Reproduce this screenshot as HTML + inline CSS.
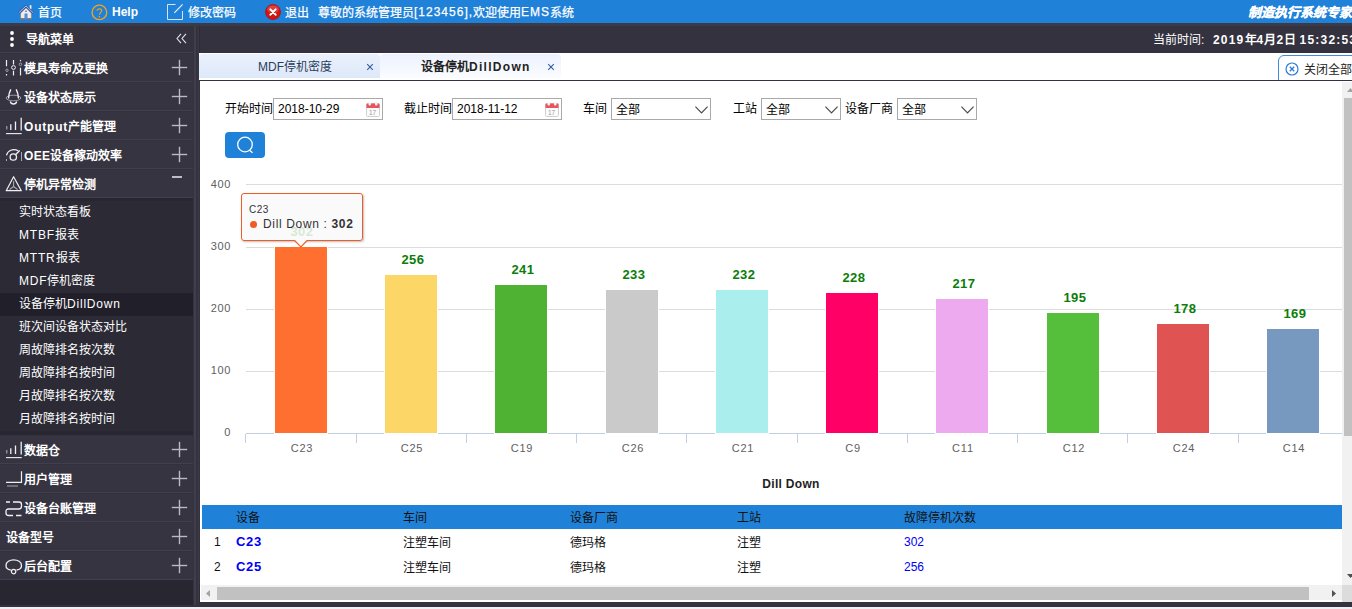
<!DOCTYPE html>
<html lang="zh-CN">
<head>
<meta charset="utf-8">
<title>EMS</title>
<style>
*{box-sizing:border-box;margin:0;padding:0}
html,body{width:1352px;height:609px;overflow:hidden;background:#34323e;font-family:"Liberation Sans",sans-serif;font-size:12px;color:#000}
.abs{position:absolute}
#top{position:absolute;left:0;top:0;width:1352px;height:23px;background:#2081d8;color:#fff;font-size:12px;line-height:26px;white-space:nowrap;overflow:hidden}
#top span{position:absolute;top:0;-webkit-text-stroke:.25px #fff}
#top svg{position:absolute}
#top u{text-decoration:none;letter-spacing:1px;position:relative;top:-1px}
#dark{position:absolute;left:0;top:23px;width:1352px;height:586px;background:#34323e}
#strip{position:absolute;left:0;top:23px;width:1352px;height:3px;background:#3c3a47}
#bottom{position:absolute;left:0;top:607px;width:1352px;height:2px;background:#f0f0f3}
#side{position:absolute;left:0;top:26px;width:193px;height:579px;background:#282731;color:#fff}
#split{position:absolute;left:194px;top:26px;width:6px;height:579px;background:linear-gradient(to right,#403e4b 0,#403e4b 2px,#34323e 2px,#34323e 4px,#3b3946 4px,#3b3946 5px,#2c2b36 5px,#2c2b36 6px)}
.mi{position:absolute;left:0;width:193px;height:29px;background:#363441;border-bottom:1px solid #423f4d;border-top:1px solid #33313d;font-weight:bold;font-size:12px;line-height:27px;white-space:nowrap}
.mi b{position:absolute;left:24px;top:2px;font-weight:bold}
.mi b u,.sub u,.tab u{text-decoration:none;letter-spacing:.8px}
.mi svg{position:absolute}
.plus{position:absolute;left:172px;top:6px;width:15px;height:15px}
.plus:before{content:"";position:absolute;left:0;top:7px;width:15px;height:1px;background:#b9b9bf;box-shadow:0 0 0 .2px #b9b9bf}
.plus:after{content:"";position:absolute;left:7px;top:0;width:1px;height:15px;background:#b9b9bf;box-shadow:0 0 0 .2px #b9b9bf}
.sub{position:absolute;left:0;width:193px;height:23px;line-height:23px;padding-left:19px;font-size:12px;color:#fff;white-space:nowrap;background:#2b2a35;overflow:hidden}
.sub.on{background:#211f2a}
#timebar u{text-decoration:none;letter-spacing:1.2px}
#timebar{overflow:hidden;position:absolute;left:199px;top:26px;width:1153px;height:27px;color:#fff;font-size:12px;line-height:27px;white-space:nowrap}
#tabs{position:absolute;left:199px;top:53px;width:1153px;height:27px;background:#fff}
.tab{position:absolute;top:1px;height:24px;width:181px;line-height:26px;font-size:12px;white-space:nowrap;border-radius:4px 4px 0 0}
#content{position:absolute;left:200px;top:81px;width:1142px;height:504px;background:#fff;overflow:hidden}
.lbl{position:absolute;top:18px;height:22px;line-height:20px;font-size:12px;white-space:nowrap}
.inp{position:absolute;top:17px;height:22px;border:1px solid #a9a9a9;background:#fff;font-size:12px;line-height:20px;padding-left:4px;white-space:nowrap}
.sel{position:absolute;top:17px;height:22px;border:1px solid #a9a9a9;background:#fff;font-size:12px;line-height:22px;padding-left:4px;white-space:nowrap}
.sel svg{position:absolute;right:2px;top:7px}
.cal{position:absolute;top:3px;right:2px;width:14px;height:15px}
.grid{position:absolute;left:46px;width:1096px;height:1px;background:#dcdcdc}
.yl{position:absolute;left:0;width:31px;text-align:right;font-size:11px;color:#606060;line-height:12px;letter-spacing:.6px}
.bar{position:absolute;width:52px;box-shadow:0 0 0 1px #fff}
.xl{position:absolute;top:360px;width:62px;text-align:center;font-size:11px;color:#606060;line-height:14px;letter-spacing:.8px}
.tick{position:absolute;top:353px;width:1px;height:9px;background:#c0d0e0}
.dl{position:absolute;width:60px;text-align:center;font-size:13px;font-weight:bold;color:#0a7d0a;line-height:14px;letter-spacing:.5px}
.th{position:absolute;top:2px;line-height:23px;font-size:12px;color:#111;white-space:nowrap}
.td.l{margin-top:1px}
.td.c{margin-top:0;letter-spacing:.7px}
.td{position:absolute;line-height:25px;margin-top:2px;font-size:12px;white-space:nowrap;color:#111}
</style>
</head>
<body>
<div id="dark"></div>
<div id="strip"></div>

<!-- top blue bar -->
<div id="top">
  <svg style="left:18px;top:5px" width="16" height="15" viewBox="0 0 16 15">
    <rect x="11.700" y=".2" width="1.700" height="4" fill="#f4f4f4"/>
    <path d="M2.600 8L8 2.800L13.400 8V14.300H2.600Z" fill="#ececec" stroke="#7a7a7a" stroke-width=".6"/>
    <path d="M2.600 13.800H13.400" stroke="#4a4a4a" stroke-width=".9"/>
    <path d="M.5 8.100L8 .9L15.500 8.100" fill="none" stroke="#3355a4" stroke-width="2.300" stroke-linejoin="miter"/>
    <path d="M.7 7.900L8 .9L15.300 7.900" fill="none" stroke="#d9e4fa" stroke-width=".8"/>
    <rect x="6.600" y="8.600" width="2.800" height="5.400" fill="#2d6bd2"/>
    <rect x="7.400" y="9.300" width="1.200" height="4.700" fill="#6fa4ee"/>
    <circle cx="8" cy="6.300" r=".8" fill="#555"/>
  </svg>
  <span style="left:38px">首页</span>
  <svg style="left:91px;top:4px" width="17" height="17" viewBox="0 0 17 17">
    <circle cx="8.400" cy="8.400" r="7.300" fill="none" stroke="#f5a31a" stroke-width="1.300"/>
    <path d="M6.100 6.700C6.100 4.300 10.700 4.300 10.700 6.800C10.700 8.500 8.400 8.700 8.400 10.700" fill="none" stroke="#f5a31a" stroke-width="1.150"/>
    <circle cx="8.400" cy="12.700" r=".8" fill="#f5a31a"/>
  </svg>
  <span style="left:112px;top:-1px;font-weight:bold;-webkit-text-stroke:0">Help</span>
  <svg style="left:166px;top:3px" width="18" height="18" viewBox="0 0 18 18">
    <path d="M9.500 1.500H1.500V16.500H16.500V8" fill="none" stroke="#d6e6f8" stroke-width="1"/>
    <path d="M16.600 1.300L8.300 9.800" fill="none" stroke="#e6f0fb" stroke-width="1.200"/>
  </svg>
  <span style="left:188px">修改密码</span>
  <svg style="left:265px;top:4px" width="16" height="16" viewBox="0 0 16 16">
    <circle cx="8" cy="8" r="7.500" fill="#d51414" stroke="#b31010" stroke-width=".8"/>
    <ellipse cx="8" cy="5.300" rx="5.600" ry="3.800" fill="#f0665a" opacity=".55"/>
    <path d="M5.300 5.300L10.700 10.700M10.700 5.300L5.300 10.700" stroke="#8c0d0d" stroke-width="3" stroke-linecap="round" opacity=".5"/>
    <path d="M5.300 5.300L10.700 10.700M10.700 5.300L5.300 10.700" stroke="#fff" stroke-width="2" stroke-linecap="round"/>
  </svg>
  <span style="left:285px">退出</span>
  <span style="left:318px">尊敬的系统管理员<u>[123456],</u>欢迎使用<u>EMS</u>系统</span>
  <span style="left:1248px;font-weight:bold;font-style:italic;font-size:13px">制造执行系统专家</span>
</div>

<!-- sidebar -->
<div id="side">
  <div class="abs" style="left:0;top:0;width:193px;height:27px;background:#34323e;border-bottom:1px solid #423f4d"></div>
  <svg class="abs" style="left:8px;top:4px" width="8" height="18" viewBox="0 0 8 18"><circle cx="4" cy="3" r="1.900" fill="#fff"/><circle cx="4" cy="9" r="1.900" fill="#fff"/><circle cx="4" cy="15" r="1.900" fill="#fff"/></svg>
  <div class="abs" style="left:26px;top:2px;line-height:25px;font-weight:bold;font-size:12px">导航菜单</div>
  <svg class="abs" style="left:176px;top:7px" width="11" height="11" viewBox="0 0 11 11"><path d="M5 .8L1 5.500L5 10.200M10 .8L6 5.500L10 10.200" fill="none" stroke="#e4e4e8" stroke-width="1.100"/></svg>
  <div class="mi" style="top:27px"><svg style="left:5px;top:4px" width="18" height="19" viewBox="0 0 18 19"><path d="M1.500 2v6.300M1.500 16v1.500M8.500 2v4.500M8.500 12.700v4.800M15.500 2v1.200M15.500 9.800v7.700" stroke="#f0f0f3" stroke-width="1.200" fill="none"/><circle cx="2" cy="12.300" r="1.200" fill="none" stroke="#a8a8b0" stroke-width=".9"/><circle cx="8.500" cy="9.500" r="1.900" fill="none" stroke="#f0f0f3" stroke-width="1"/><circle cx="15.500" cy="6.300" r="1.300" fill="none" stroke="#a8a8b0" stroke-width=".9"/></svg><b>模具寿命及更换</b><i class="plus"></i></div>
  <div class="mi" style="top:56px"><svg style="left:5px;top:4px" width="18" height="19" viewBox="0 0 18 19"><ellipse cx="8.500" cy="11" rx="7.300" ry="2.800" fill="none" stroke="#a8a8b0" stroke-width=".9"/><path d="M5.800 2.300C4.600 4.500 3.600 8 3.500 11.500M11.200 2.300C12.400 4.500 13.400 8 13.500 11.500" stroke="#f2f2f5" stroke-width="1.400" fill="none"/><path d="M5.300 14.500c.7 3.300 5.700 3.300 6.400 0" stroke="#f2f2f5" stroke-width="1.300" fill="none"/></svg><b>设备状态展示</b><i class="plus"></i></div>
  <div class="mi" style="top:85px"><svg style="left:5px;top:4px" width="18" height="19" viewBox="0 0 18 19"><path d="M1.800 10v3.500" stroke="#a8a8b0" stroke-width="1.100"/><path d="M5.800 8.300v5.700M10.500 5.400v8.600M16.200 1.800v12.700" stroke="#f0f0f3" stroke-width="1.300" fill="none"/><path d="M1 17.600h15.700" stroke="#f0f0f3" stroke-width="1.100"/></svg><b><u>Output</u>产能管理</b><i class="plus"></i></div>
  <div class="mi" style="top:114px"><svg style="left:5px;top:4px" width="18" height="19" viewBox="0 0 18 19"><path d="M1.500 10.300C2.500 5.500 8 3 13.300 5.800" stroke="#f0f0f3" stroke-width="1.200" fill="none"/><circle cx="8.300" cy="12" r="3.200" fill="none" stroke="#f0f0f3" stroke-width="1.300"/><path d="M10.500 9.700l4.200-4.200" stroke="#f0f0f3" stroke-width="1.300"/><path d="M16.500 7v9M1.500 14v2" stroke="#a8a8b0" stroke-width="1"/></svg><b><u style="letter-spacing:.3px">OEE</u>设备稼动效率</b><i class="plus"></i></div>
  <div class="mi" style="top:143px"><svg style="left:5px;top:4px" width="18" height="19" viewBox="0 0 18 19"><path d="M8.600 2.700L1.200 16.700H16.300Z" stroke="#f0f0f3" stroke-width="1.200" fill="none" stroke-linejoin="round"/><path d="M8.600 7v5.500M8.600 12.500l-4 3M8.600 12.500l4 3" stroke="#a8a8b0" stroke-width="1.100" fill="none"/></svg><b>停机异常检测</b><div class="abs" style="left:172px;top:6px;width:10px;height:2px;background:#bdbdc3"></div></div>
  <div class="sub" style="top:175px">实时状态看板</div>
  <div class="sub" style="top:198px"><u>MTBF</u>报表</div>
  <div class="sub" style="top:221px"><u>MTTR</u>报表</div>
  <div class="sub" style="top:244px"><u>MDF</u>停机密度</div>
  <div class="sub on" style="top:267px">设备停机<u>DillDown</u></div>
  <div class="sub" style="top:290px">班次间设备状态对比</div>
  <div class="sub" style="top:313px">周故障排名按次数</div>
  <div class="sub" style="top:336px">周故障排名按时间</div>
  <div class="sub" style="top:359px">月故障排名按次数</div>
  <div class="sub" style="top:382px">月故障排名按时间</div>
  <div class="mi" style="top:409px"><svg style="left:5px;top:4px" width="18" height="19" viewBox="0 0 18 19"><path d="M1.800 10v3.500" stroke="#a8a8b0" stroke-width="1.100"/><path d="M5.800 8.300v5.700M10.500 5.400v8.600M16.200 1.800v12.700" stroke="#f0f0f3" stroke-width="1.300" fill="none"/><path d="M1 17.600h15.700" stroke="#f0f0f3" stroke-width="1.100"/></svg><b>数据仓</b><i class="plus"></i></div>
  <div class="mi" style="top:438px"><svg style="left:5px;top:4px" width="18" height="19" viewBox="0 0 18 19"><path d="M1 13.400H16.500V2.300" stroke="#f0f0f3" stroke-width="1.200" fill="none"/><path d="M2 17h11" stroke="#a8a8b0" stroke-width="1"/></svg><b>用户管理</b><i class="plus"></i></div>
  <div class="mi" style="top:467px"><svg style="left:5px;top:4px" width="18" height="19" viewBox="0 0 18 19"><path d="M1 4h4M8 4h6q2.500 0 2.500 2.500v1.500q0 3-2.500 3H3.500q-2.500 0-2.500 2.500v1.500q0 2.500 2.500 2.500H8M11 17.500h5.500" stroke="#f0f0f3" stroke-width="1.300" fill="none"/></svg><b>设备台账管理</b><i class="plus"></i></div>
  <div class="mi" style="top:496px"><b style="left:6px">设备型号</b><i class="plus"></i></div>
  <div class="mi" style="top:525px"><svg style="left:5px;top:4px" width="18" height="19" viewBox="0 0 18 19"><path d="M5.800 14C3 13.700 1 12 1 9.500C1 2 16.500 2 16.500 9.500C16.500 12 14.500 13.700 11.600 14" stroke="#f0f0f3" stroke-width="1.300" fill="none"/><circle cx="8.600" cy="15.600" r="2.200" fill="none" stroke="#f0f0f3" stroke-width="1.200"/></svg><b>后台配置</b><i class="plus"></i></div>
</div>
<div id="split"></div>

<!-- right header (time) -->
<div id="timebar"><span class="abs" style="left:954px;top:1px">当前时间:</span><span class="abs" style="left:1014px;top:1px;font-size:12px;font-weight:bold"><u>2019</u>年<u>4</u>月<u>2</u>日 <u>15:32:53</u></span></div>

<!-- tabs -->
<div id="tabs">
  <div class="tab" style="left:0;background:linear-gradient(#eaf1fc,#dde8f9);color:#2c3d5a"><span class="abs" style="left:59px">MDF停机密度</span><svg class="abs" style="left:167px;top:9px" width="8" height="8" viewBox="0 0 8 8"><path d="M1.200 1.200l5.600 5.600M6.800 1.200l-5.600 5.600" stroke="#36609f" stroke-width="1.150"/></svg></div>
  <div class="tab" style="left:181px;background:linear-gradient(#ecf2fd,#fafcff);color:#222;font-weight:bold"><span class="abs" style="left:41px">设备停机<u style="letter-spacing:1.3px">DillDown</u></span><svg class="abs" style="left:167px;top:9px" width="8" height="8" viewBox="0 0 8 8"><path d="M1.200 1.200l5.600 5.600M6.800 1.200l-5.600 5.600" stroke="#36609f" stroke-width="1.150"/></svg></div>
  <div class="abs" style="left:1079px;top:2px;width:90px;height:26px;border:1px solid #3c8be0;border-radius:6px 0 0 0;background:#fff">
    <svg class="abs" style="left:6px;top:6px" width="14" height="14" viewBox="0 0 14 14"><circle cx="7" cy="7" r="6" fill="none" stroke="#2a7ad8" stroke-width="1.200"/><path d="M4.800 4.800l4.400 4.400M9.200 4.800l-4.400 4.400" stroke="#2a7ad8" stroke-width="1.300"/></svg>
    <span class="abs" style="left:25px;top:2px;line-height:24px;font-size:12px;color:#222;white-space:nowrap">关闭全部</span>
  </div>
</div>
<div class="abs" style="left:199px;top:80px;width:1153px;height:1px;background:#34323e"></div>
<div class="abs" style="left:199px;top:81px;width:1px;height:504px;background:#34323e"></div>

<!-- content -->
<div id="content">
  <div class="lbl" style="left:25px">开始时间</div>
  <div class="inp" style="left:73px;width:110px">2018-10-29<svg class="cal" viewBox="0 0 14 15"><rect x=".5" y="1.500" width="13" height="13" rx="1" fill="#fbfbfb" stroke="#d0d0d0"/><path d="M.5 2.500q0-1 1-1h11q1 0 1 1V6H.5z" fill="#e8555c"/><rect x="2.500" y="0" width="2.500" height="3.500" rx="1" fill="#f2f2f2"/><rect x="9" y="0" width="2.500" height="3.500" rx="1" fill="#f2f2f2"/><text x="6.500" y="13" font-size="6.500" font-family="Liberation Sans, sans-serif" text-anchor="middle" fill="#999">17</text></svg></div>
  <div class="lbl" style="left:204px">截止时间</div>
  <div class="inp" style="left:252px;width:110px">2018-11-12<svg class="cal" viewBox="0 0 14 15"><rect x=".5" y="1.500" width="13" height="13" rx="1" fill="#fbfbfb" stroke="#d0d0d0"/><path d="M.5 2.500q0-1 1-1h11q1 0 1 1V6H.5z" fill="#e8555c"/><rect x="2.500" y="0" width="2.500" height="3.500" rx="1" fill="#f2f2f2"/><rect x="9" y="0" width="2.500" height="3.500" rx="1" fill="#f2f2f2"/><text x="6.500" y="13" font-size="6.500" font-family="Liberation Sans, sans-serif" text-anchor="middle" fill="#999">17</text></svg></div>
  <div class="lbl" style="left:383px">车间</div>
  <div class="sel" style="left:411px;width:100px">全部<svg width="13" height="8" viewBox="0 0 13 8"><path d="M.4 .6L6.500 6.800L12.600 .6" fill="none" stroke="#4a4a4a" stroke-width="1.200"/></svg></div>
  <div class="lbl" style="left:533px">工站</div>
  <div class="sel" style="left:561px;width:80px">全部<svg width="13" height="8" viewBox="0 0 13 8"><path d="M.4 .6L6.500 6.800L12.600 .6" fill="none" stroke="#4a4a4a" stroke-width="1.200"/></svg></div>
  <div class="lbl" style="left:645px">设备厂商</div>
  <div class="sel" style="left:697px;width:80px">全部<svg width="13" height="8" viewBox="0 0 13 8"><path d="M.4 .6L6.500 6.800L12.600 .6" fill="none" stroke="#4a4a4a" stroke-width="1.200"/></svg></div>

  <div class="abs" style="left:25px;top:51px;width:40px;height:26px;border-radius:4px;background:#2081d8">
    <svg class="abs" style="left:10px;top:3px" width="20" height="20" viewBox="0 0 20 20"><circle cx="10" cy="9.500" r="7.300" fill="none" stroke="#fff" stroke-width="1.300"/><path d="M14.500 15.300l3 2.500" stroke="#fff" stroke-width="1.300"/></svg>
  </div>

  <!-- chart : origin = content (200,81) -->
  <div class="grid" style="top:103px"></div>
  <div class="grid" style="top:166px"></div>
  <div class="grid" style="top:228px"></div>
  <div class="grid" style="top:290px"></div>
  <div class="grid" style="top:352px;background:#c0d0e0"></div>
  <div class="yl" style="top:97px">400</div>
  <div class="yl" style="top:159px">300</div>
  <div class="yl" style="top:221px">200</div>
  <div class="yl" style="top:283px">100</div>
  <div class="yl" style="top:345px">0</div>

  <div class="bar" style="left:75px;top:166px;height:186px;background:#ff7030"></div>
  <div class="bar" style="left:185px;top:194px;height:158px;background:#fcd667"></div>
  <div class="bar" style="left:295px;top:204px;height:148px;background:#50b232"></div>
  <div class="bar" style="left:406px;top:209px;height:143px;background:#cacaca"></div>
  <div class="bar" style="left:516px;top:209px;height:143px;background:#aaeeee"></div>
  <div class="bar" style="left:626px;top:212px;height:140px;background:#ff0066"></div>
  <div class="bar" style="left:736px;top:218px;height:134px;background:#eeaaee"></div>
  <div class="bar" style="left:847px;top:232px;height:120px;background:#55bf3b"></div>
  <div class="bar" style="left:957px;top:243px;height:109px;background:#df5353"></div>
  <div class="bar" style="left:1067px;top:248px;height:104px;background:#7798bf"></div>

  <div class="tick" style="left:45px"></div><div class="tick" style="left:156px"></div><div class="tick" style="left:266px"></div><div class="tick" style="left:376px"></div><div class="tick" style="left:486px"></div><div class="tick" style="left:597px"></div><div class="tick" style="left:707px"></div><div class="tick" style="left:817px"></div><div class="tick" style="left:927px"></div><div class="tick" style="left:1038px"></div>

  <div class="xl" style="left:71px">C23</div><div class="xl" style="left:181px">C25</div><div class="xl" style="left:291px">C19</div><div class="xl" style="left:402px">C26</div><div class="xl" style="left:512px">C21</div><div class="xl" style="left:622px">C9</div><div class="xl" style="left:732px">C11</div><div class="xl" style="left:843px">C12</div><div class="xl" style="left:953px">C24</div><div class="xl" style="left:1063px">C14</div>

  <div class="dl" style="left:72px;top:144px">302</div>
  <div class="dl" style="left:183px;top:172px">256</div>
  <div class="dl" style="left:293px;top:182px">241</div>
  <div class="dl" style="left:404px;top:187px">233</div>
  <div class="dl" style="left:514px;top:187px">232</div>
  <div class="dl" style="left:624px;top:190px">228</div>
  <div class="dl" style="left:734px;top:196px">217</div>
  <div class="dl" style="left:845px;top:210px">195</div>
  <div class="dl" style="left:955px;top:221px">178</div>
  <div class="dl" style="left:1065px;top:226px">169</div>

  <div class="abs" style="left:541px;top:396px;width:100px;text-align:center;font-weight:bold;font-size:12px;color:#222;line-height:14px;white-space:nowrap;letter-spacing:.3px">Dill Down</div>

  <!-- tooltip -->
  <div class="abs" style="left:41px;top:112px;width:122px;height:48px;border:1px solid #f15c25;border-radius:3px;background:rgba(249,249,249,.85);box-shadow:1px 1px 2px rgba(30,40,60,.3)">
    <div class="abs" style="left:7px;top:10px;font-size:10px;line-height:12px;color:#333;letter-spacing:.5px">C23</div>
    <div class="abs" style="left:8px;top:27px;width:7px;height:7px;border-radius:50%;background:#f15c25"></div>
    <div class="abs" style="left:21px;top:23px;font-size:12px;line-height:14px;color:#333;white-space:nowrap;letter-spacing:.65px">Dill Down : <b>302</b></div>
  </div>
  <svg class="abs" style="left:93px;top:158px" width="16" height="9" viewBox="0 0 16 9"><rect x="2.200" y="0" width="11.400" height="2" fill="#fafafa"/><path d="M1.600 1.500L7.900 7.900L14.200 1.500" fill="#fafafa" stroke="#f15c25" stroke-width="1.100"/></svg>

  <!-- table -->
  <div class="abs" style="left:2px;top:424px;width:1140px;height:24px;background:#2081d8">
    <span class="th" style="left:34px">设备</span><span class="th" style="left:201px">车间</span><span class="th" style="left:368px">设备厂商</span><span class="th" style="left:535px">工站</span><span class="th" style="left:702px">故障停机次数</span>
  </div>
  <span class="td l" style="left:14px;top:448px">1</span><span class="td c" style="left:36px;top:448px;color:#0000f5;font-weight:bold;font-size:13px">C23</span><span class="td" style="left:203px;top:448px">注塑车间</span><span class="td" style="left:370px;top:448px">德玛格</span><span class="td" style="left:537px;top:448px">注塑</span><span class="td l" style="left:704px;top:448px;color:#0000f5">302</span>
  <span class="td l" style="left:14px;top:473px">2</span><span class="td c" style="left:36px;top:473px;color:#0000f5;font-weight:bold;font-size:13px">C25</span><span class="td" style="left:203px;top:473px">注塑车间</span><span class="td" style="left:370px;top:473px">德玛格</span><span class="td" style="left:537px;top:473px">注塑</span><span class="td l" style="left:704px;top:473px;color:#0000f5">256</span>
</div>

<!-- vertical scrollbar -->
<div class="abs" style="left:1342px;top:81px;width:10px;height:504px;background:#fff;overflow:hidden">
  <div class="abs" style="left:0;top:1px;width:10px;height:503px;background:#f1f1f1"></div>
  <svg class="abs" style="left:5px;top:7px" width="7" height="4" viewBox="0 0 7 4"><path d="M0 4L3.500 0L7 4z" fill="#a3a3a3"/></svg>
  <div class="abs" style="left:2px;top:17px;width:8px;height:338px;background:#c1c1c1"></div>
  <svg class="abs" style="left:5px;top:493px" width="7" height="4" viewBox="0 0 7 4"><path d="M0 0L3.500 4L7 0z" fill="#505050"/></svg>
</div>
<!-- horizontal scrollbar -->
<div class="abs" style="left:200px;top:585px;width:1152px;height:17px;background:#fff">
  <div class="abs" style="left:1px;top:0;width:1141px;height:15px;background:#f1f1f1"></div>
  <svg class="abs" style="left:6px;top:5px" width="4" height="7" viewBox="0 0 4 7"><path d="M4 0L0 3.500L4 7z" fill="#a3a3a3"/></svg>
  <div class="abs" style="left:17px;top:2px;width:1092px;height:13px;background:#c1c1c1"></div>
  <svg class="abs" style="left:1132px;top:5px" width="4" height="7" viewBox="0 0 4 7"><path d="M0 0L4 3.500L0 7z" fill="#505050"/></svg>
  <div class="abs" style="left:1142px;top:0;width:10px;height:17px;background:#dcdcdc"></div>
</div>
<div id="bottom"></div>
</body>
</html>
